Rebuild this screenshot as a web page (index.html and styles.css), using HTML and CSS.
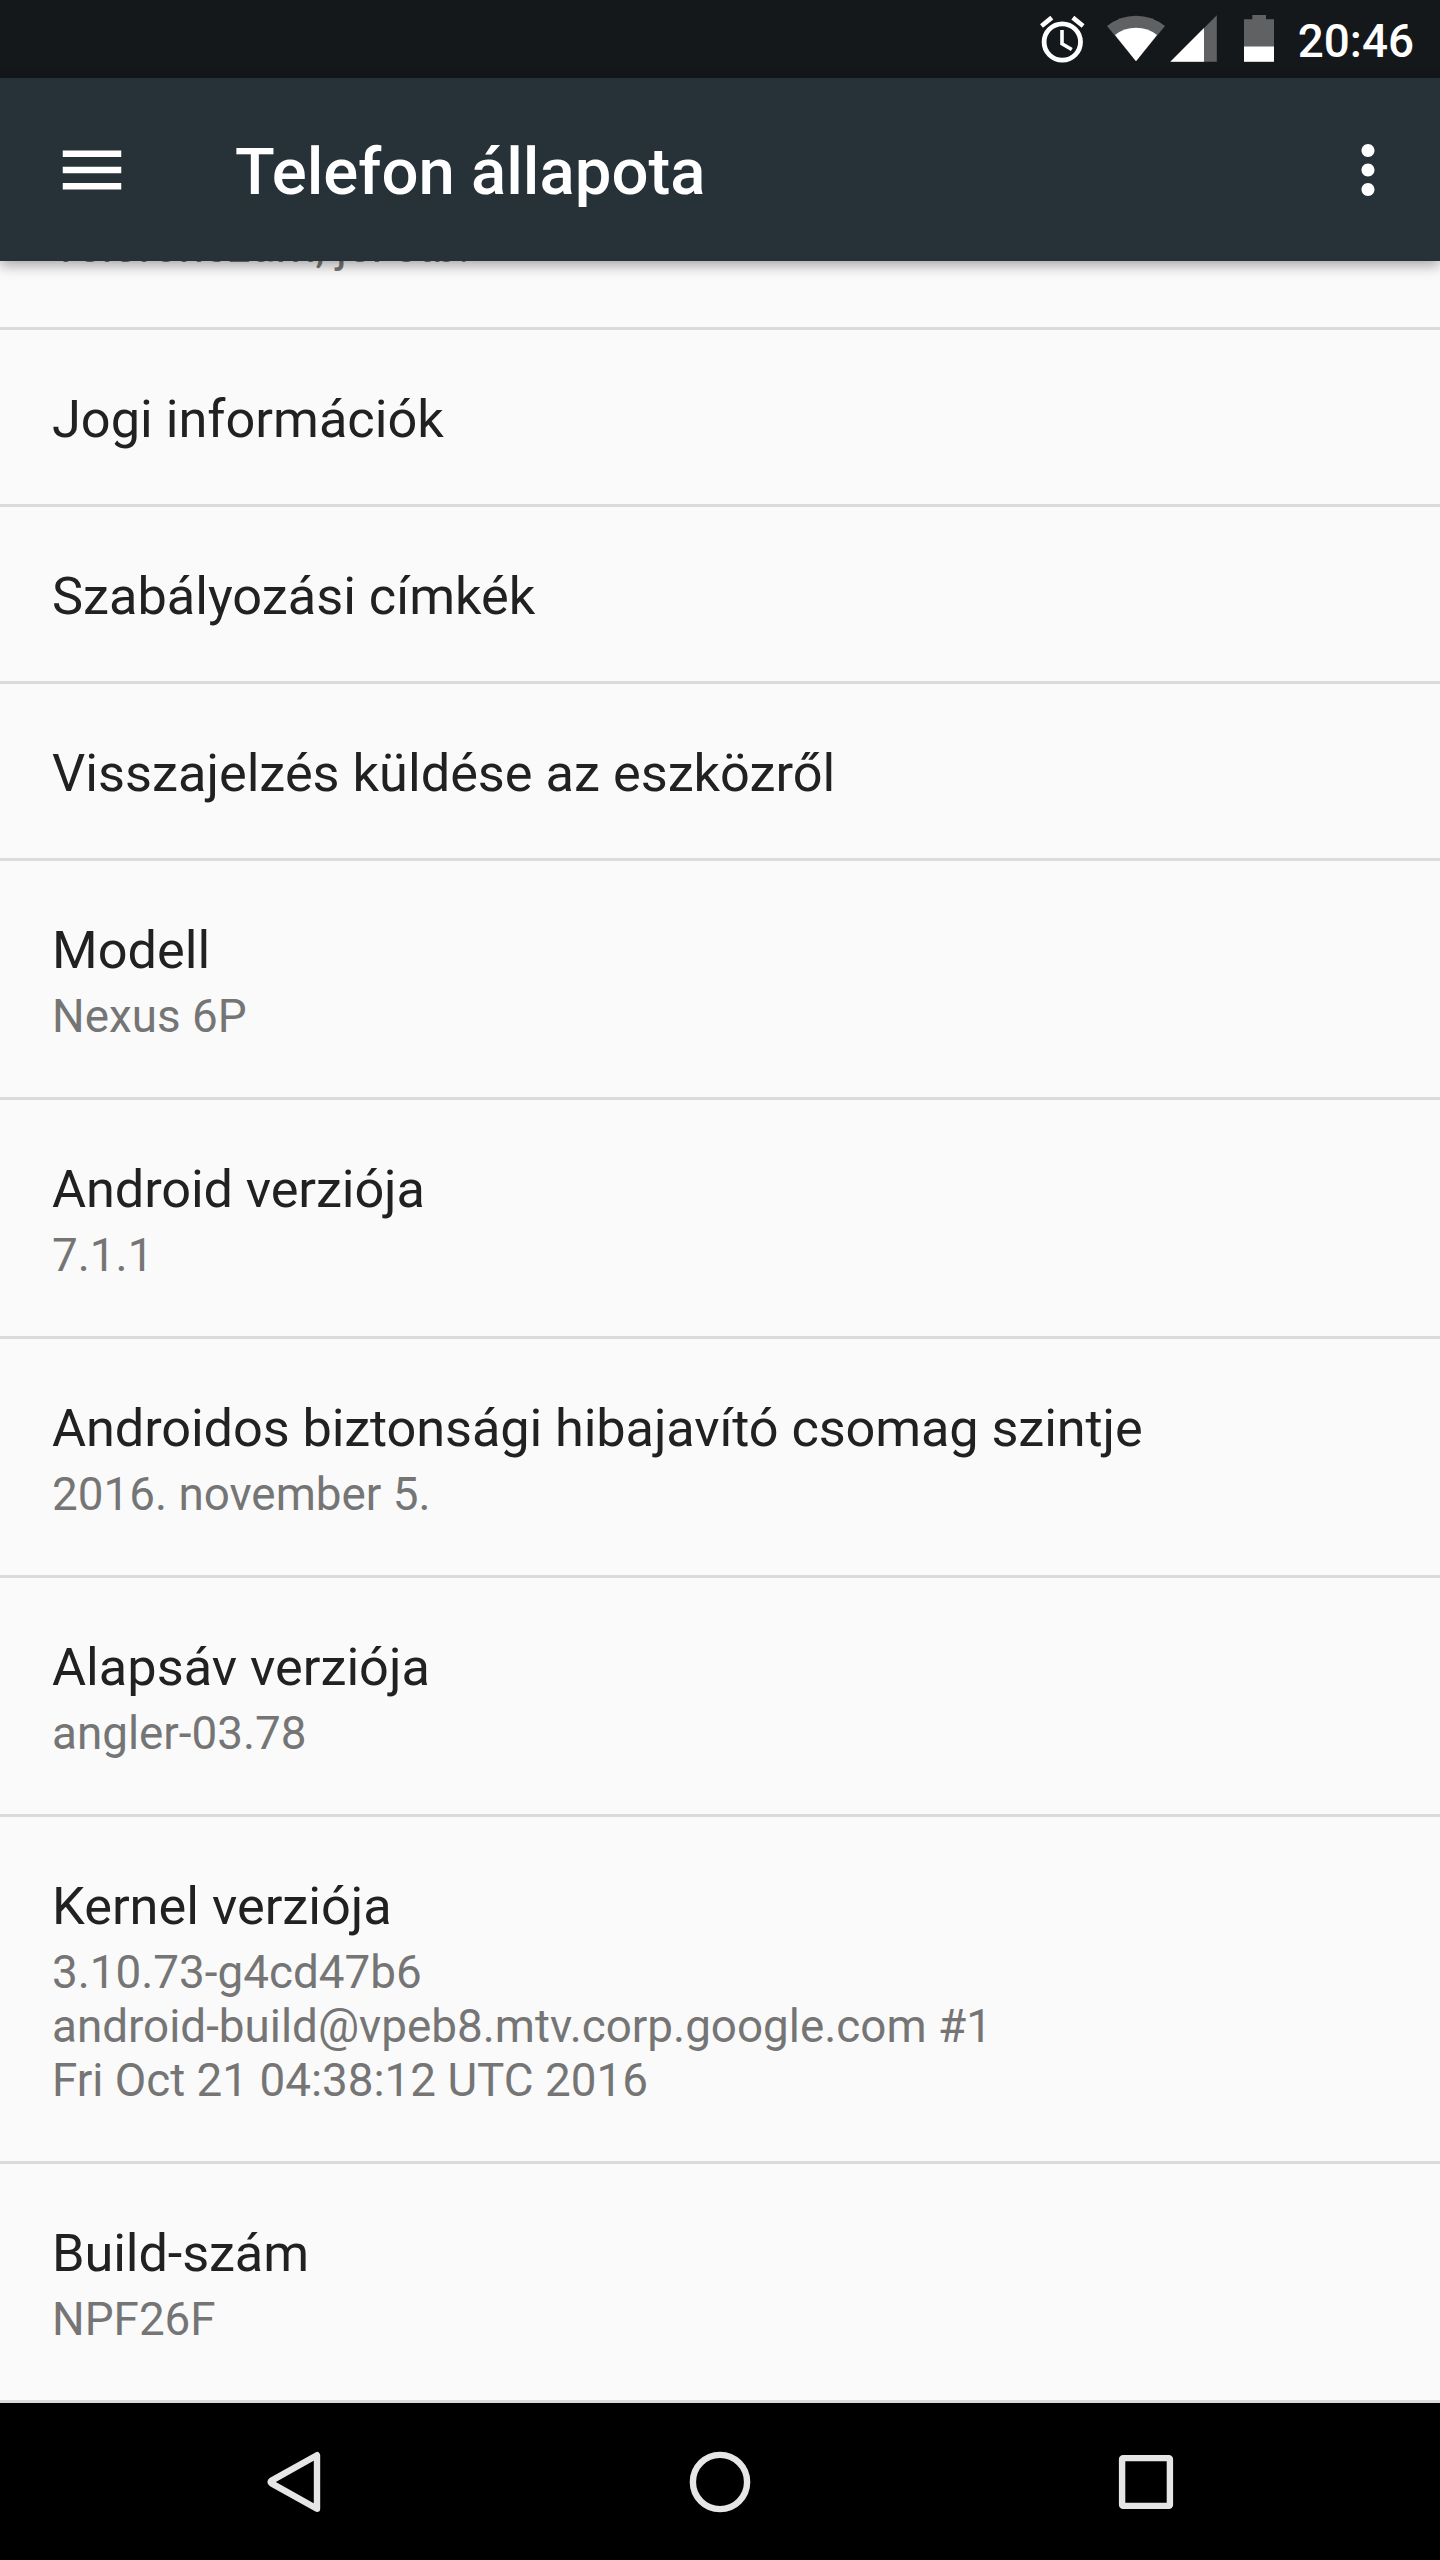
FILE: index.html
```html
<!DOCTYPE html>
<html lang="hu">
<head>
    <meta charset="UTF-8">
    <meta name="viewport" content="width=device-width, initial-scale=1.0">
    <title>Telefon állapota</title>
    <link rel="stylesheet" href="styles.css">
</head>
<body>
    <div class="screen">
        <div class="status-bar">
            <svg class="status-icons" width="240" height="78" viewBox="1040 0 240 78">
                <!-- alarm -->
                <circle cx="1062.3" cy="42" r="18.2" fill="none" stroke="#fff" stroke-width="4.8"/>
                <path d="M1062 30v13.7l9.8 5.8" fill="none" stroke="#fff" stroke-width="3.6"/>
                <path d="M1041.5 26l10.3-8.4M1083.1 26l-10.3-8.4" fill="none" stroke="#fff" stroke-width="4.6"/>
                <!-- wifi -->
                <path d="M1136 61.3L1107 26Q1120 15.7 1136 15.7T1165 26Z" fill="#5f6162"/>
                <path d="M1136 61.3L1115 35Q1124 27.8 1136 27.8T1157 35Z" fill="#fff"/>
                <!-- signal -->
                <path d="M1170.3 61.8L1216.8 15.3V61.8Z" fill="#5f6162"/>
                <path d="M1170.3 61.8L1204 28.1V61.8Z" fill="#fff"/>
                <!-- battery -->
                <path d="M1244 19.3h8.3V15h13.7v4.3h8V47h-30z" fill="#5f6162"/>
                <path d="M1244 46.5h30v15.3h-30z" fill="#fff"/>
            </svg>
            <span class="clock">20:46</span>
        </div>
        <header class="toolbar">
            <svg class="menu-icon" width="78" height="78" viewBox="0 0 24 24">
                <path d="M3 18h18v-2H3v2zm0-5h18v-2H3v2zm0-7v2h18V6H3z" fill="#fff"/>
            </svg>
            <h1>Telefon állapota</h1>
            <svg class="more-icon" width="78" height="78" viewBox="0 0 24 24">
                <path d="M12 8c1.1 0 2-.9 2-2s-.9-2-2-2-2 .9-2 2 .9 2 2 2zm0 2c-1.1 0-2 .9-2 2s.9 2 2 2 2-.9 2-2-.9-2-2-2zm0 6c-1.1 0-2 .9-2 2s.9 2 2 2 2-.9 2-2-.9-2-2-2z" fill="#fff"/>
            </svg>
        </header>
        <main class="list">
            <div class="item">
                <p>Telefonszám, jel stb.</p>
            </div>
            <div class="item single">
                <h2>Jogi információk</h2>
            </div>
            <div class="item single">
                <h2>Szabályozási címkék</h2>
            </div>
            <div class="item single">
                <h2>Visszajelzés küldése az eszközről</h2>
            </div>
            <div class="item">
                <h2>Modell</h2>
                <p>Nexus 6P</p>
            </div>
            <div class="item">
                <h2 class="tight">Android verziója</h2>
                <p>7.1.1</p>
            </div>
            <div class="item">
                <h2 class="tight">Androidos biztonsági hibajavító csomag szintje</h2>
                <p>2016. november 5.</p>
            </div>
            <div class="item">
                <h2>Alapsáv verziója</h2>
                <p>angler-03.78</p>
            </div>
            <div class="item">
                <h2>Kernel verziója</h2>
                <p>3.10.73-g4cd47b6<br>android-build@vpeb8.mtv.corp.google.com #1<br>Fri Oct 21 04:38:12 UTC 2016</p>
            </div>
            <div class="item">
                <h2 class="tight">Build-szám</h2>
                <p>NPF26F</p>
            </div>
        </main>
        <nav class="nav-bar">
            <svg width="80" height="80" viewBox="0 0 80 80">
                <path d="M63 13.2V66.8L17.6 41.4Q15.6 40 17.6 38.6Z"/>
            </svg>
            <svg width="80" height="80" viewBox="0 0 80 80">
                <circle cx="40" cy="40" r="27.1"/>
            </svg>
            <svg width="80" height="80" viewBox="0 0 80 80">
                <rect x="16.1" y="16.1" width="47.8" height="47.8" rx="1"/>
            </svg>
        </nav>
    </div>
</body>
</html>
```

FILE: styles.css
```css
body {
    margin: 0;
    font-family: Roboto, sans-serif;
    background: #000;
}
.screen {
    display: flex;
    flex-direction: column;
    width: 1440px;
    height: 2560px;
    overflow: hidden;
}
.status-bar {
    display: flex;
    align-items: center;
    justify-content: flex-end;
    flex: none;
    height: 78px;
    padding-right: 26px;
    box-sizing: border-box;
    background: #14181b;
    color: #fff;
}
.clock {
    margin-left: 18px;
    font-size: 45.8px;
    font-weight: 500;
    line-height: 54px;
    padding-top: 5px;
}
.toolbar {
    display: flex;
    align-items: center;
    flex: none;
    height: 183px;
    padding: 0 33px 0 53px;
    box-sizing: border-box;
    background: #263238;
    color: #fff;
    box-shadow: 0 4px 13px rgba(0, 0, 0, 0.36);
    z-index: 1;
}
.toolbar h1 {
    flex: 1;
    margin: 0 0 0 104px;
    font-size: 65.3px;
    font-weight: 500;
    line-height: 76px;
    padding-top: 5px;
}
/* scrolled, so the first item is cut by the toolbar */
.list {
    display: flex;
    flex-direction: column;
    justify-content: flex-end;
    flex: 1;
    min-height: 0;
    overflow: hidden;
    background: #fafafa;
}
.item {
    flex: none;
    padding: 59px 52px 53px;
    border-bottom: 3px solid #dbdbdb;
}
.item.single {
    padding-bottom: 54px;
}
.item h2 {
    margin: 0;
    font-size: 52.3px;
    font-weight: 400;
    line-height: 61px;
    color: #212121;
}
.item h2.tight {
    letter-spacing: -0.11px;
}
.item p {
    margin: 0;
    font-size: 45.8px;
    line-height: 54px;
    color: #757575;
}
.item h2 + p {
    margin-top: 9px;
}
.nav-bar {
    display: flex;
    align-items: center;
    justify-content: space-between;
    flex: none;
    height: 157px;
    padding: 0 254px;
    box-sizing: border-box;
    background: #000;
}
.nav-bar svg {
    fill: none;
    stroke: #e6e6e6;
    stroke-width: 6.4;
    stroke-linejoin: round;
}
```
